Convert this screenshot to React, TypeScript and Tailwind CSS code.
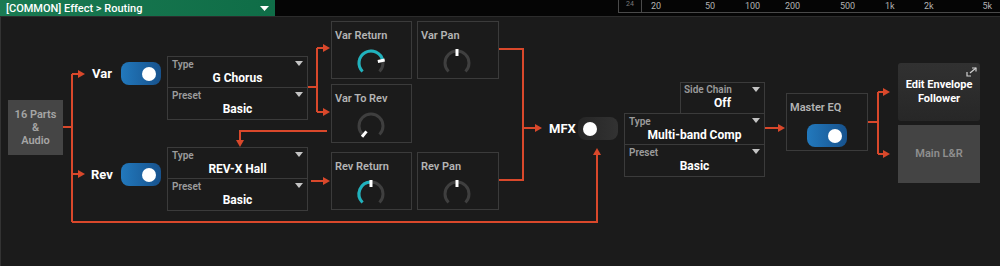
import React from "react";

const WIRE = "#d9482b";

function polar(cx: number, cy: number, r: number, deg: number) {
  const rad = (deg * Math.PI) / 180;
  return [cx + r * Math.sin(rad), cy - r * Math.cos(rad)];
}

function arc(cx: number, cy: number, r: number, from: number, to: number) {
  const [x1, y1] = polar(cx, cy, r, from);
  const [x2, y2] = polar(cx, cy, r, to);
  const large = to - from > 180 ? 1 : 0;
  return `M ${x1} ${y1} A ${r} ${r} 0 ${large} 1 ${x2} ${y2}`;
}

function Knob({ value, fill }: { value: number; fill?: boolean }) {
  const [ix1, iy1] = polar(16, 16, 7, value);
  const [ix2, iy2] = polar(16, 16, 14, value);
  return (
    <svg width="32" height="32" viewBox="0 0 32 32">
      <path d={arc(16, 16, 12, -135, 135)} stroke="#3f3f3f" strokeWidth="3" fill="none" />
      {fill && value > -135 && (
        <path d={arc(16, 16, 12, -135, value)} stroke="#1fb2bd" strokeWidth="3" fill="none" />
      )}
      <line x1={ix1} y1={iy1} x2={ix2} y2={iy2} stroke="#ffffff" strokeWidth="3" />
    </svg>
  );
}

function KnobBox({ title, value, fill, className = "" }: { title: string; value: number; fill?: boolean; className?: string }) {
  return (
    <div className={`h-[58px] border border-[#3b3b3b] bg-[#1b1b1b] ${className}`}>
      <div className="pl-[3px] pt-[7px] text-[11px] font-semibold leading-[13px] text-[#b4b4b4]">{title}</div>
      <div className="mt-[5px] flex justify-center pr-[2px]">
        <Knob value={value} fill={fill} />
      </div>
    </div>
  );
}

function Caret() {
  return (
    <svg width="8" height="5" viewBox="0 0 8 5" className="absolute right-[4px] top-[4px]">
      <polygon points="0,0 8,0 4,5" fill="#c4c4c4" />
    </svg>
  );
}

function SelectRow({ label, value, last }: { label: string; value: string; last?: boolean }) {
  return (
    <div className={`relative h-[31px] ${last ? "" : "border-b border-[#3b3b3b]"}`}>
      <div className="pl-[4px] pt-[2px] text-[10px] font-semibold leading-[12px] text-[#9c9c9c]">{label}</div>
      <Caret />
      <div className="text-center text-[12px] font-bold leading-[15px] text-white">{value}</div>
    </div>
  );
}

function FxBox({ type, className = "" }: { type: string; className?: string }) {
  return (
    <div className={`w-[141px] border border-[#3b3b3b] bg-[#1b1b1b] ${className}`}>
      <SelectRow label="Type" value={type} />
      <SelectRow label="Preset" value="Basic" last />
    </div>
  );
}

function Toggle({ on }: { on: boolean }) {
  return (
    <div
      className={`flex h-[23px] w-[40px] items-center rounded-[8px] px-[5px] ${
        on
          ? "justify-end bg-gradient-to-r from-[#2279bd] to-[#17528d]"
          : "justify-start bg-gradient-to-r from-[#262626] to-[#323232]"
      }`}
    >
      <div className="h-[14px] w-[14px] rounded-full bg-white" />
    </div>
  );
}

function Switch({ label, on, className }: { label: string; on: boolean; className: string }) {
  return (
    <div className={`absolute flex h-[23px] items-center justify-between ${className}`}>
      <span className="text-[13px] font-bold leading-[16px] text-white">{label}</span>
      <Toggle on={on} />
    </div>
  );
}

function Wires() {
  const arrowR = (x: number, y: number) => `${x - 7},${y - 4} ${x},${y} ${x - 7},${y + 4}`;
  const arrowD = (x: number, y: number) => `${x - 4},${y - 7} ${x},${y} ${x + 4},${y - 7}`;
  const arrowU = (x: number, y: number) => `${x - 4},${y + 7} ${x},${y} ${x + 4},${y + 7}`;
  return (
    <svg className="absolute inset-0" width="1000" height="249" viewBox="0 0 1000 249">
      <g stroke={WIRE} strokeWidth="2" fill="none">
        <path d="M62 110 H71" />
        <path d="M71 57 V205" />
        <path d="M71 57 H80" />
        <path d="M71 157 H80" />
        <path d="M71 205 H596 V136" />
        <path d="M307 70 H316" />
        <path d="M316 31 V95" />
        <path d="M316 31 H325" />
        <path d="M316 95 H325" />
        <path d="M326 114 H239 V124" />
        <path d="M310 164 H323" />
        <path d="M498 32 H522 V163 H498" />
        <path d="M522 111 H535" />
        <path d="M764 111 H778" />
        <path d="M867 105 H877" />
        <path d="M877 75 V137" />
        <path d="M877 75 H883" />
        <path d="M877 137 H883" />
      </g>
      <g fill={WIRE}>
        <polygon points={arrowR(84, 57)} />
        <polygon points={arrowR(84, 157)} />
        <polygon points={arrowR(329, 31)} />
        <polygon points={arrowR(329, 95)} />
        <polygon points={arrowD(239, 130)} />
        <polygon points={arrowR(329, 164)} />
        <polygon points={arrowR(541, 111)} />
        <polygon points={arrowR(784, 111)} />
        <polygon points={arrowR(889, 75)} />
        <polygon points={arrowR(889, 137)} />
        <polygon points={arrowU(596, 131)} />
      </g>
    </svg>
  );
}

const scale = ["20", "50", "100", "200", "500", "1k", "2k", "5k"];

export default function App() {
  return (
    <div className="h-[266px] w-[1000px] overflow-hidden bg-[#1b1b1b] font-['Roboto','Noto_Sans',sans-serif]">
      <header className="flex h-[16px] bg-[#050505]">
        <div className="flex h-[16px] w-[275px] items-center justify-between bg-gradient-to-r from-[#1a7a52] to-[#0f6d47] px-[6px]">
          <span className="text-[11px] font-medium leading-none text-white">[COMMON] Effect &gt; Routing</span>
          <svg width="9" height="5" viewBox="0 0 9 5">
            <polygon points="0,0 9,0 4.5,5" fill="#ffffff" />
          </svg>
        </div>
        <div className="ml-[343px] flex h-[13px] w-[24px] items-start justify-center border-x border-b border-[#4a4a4a]">
          <span className="text-[7px] leading-[8px] text-[#7a7a7a]">24</span>
        </div>
        <div className="flex h-[13px] flex-1 items-center border-b border-[#4a4a4a] pl-[9px] pr-[8px] text-[9px] leading-[10px] text-[#b2b2b2]">
          <span className="w-[54px]">{scale[0]}</span>
          <span className="w-[40px]">{scale[1]}</span>
          <span className="w-[40px]">{scale[2]}</span>
          <span className="w-[55px]">{scale[3]}</span>
          <span className="w-[45px]">{scale[4]}</span>
          <span className="w-[39px]">{scale[5]}</span>
          <span className="flex-1">{scale[6]}</span>
          <span>{scale[7]}</span>
        </div>
      </header>
      <div className="h-px bg-[#2c2c2c]" />
      <main className="relative h-[249px] border-l border-[#333333]">
        <Wires />

        <div className="absolute left-[7px] top-[83px] flex h-[55px] w-[55px] flex-col items-center justify-center bg-[#454545] text-[11px] font-semibold leading-[13px] text-[#a6a6a6]">
          <span>16 Parts</span>
          <span>&amp;</span>
          <span>Audio</span>
        </div>

        <Switch label="Var" on className="left-[91px] top-[45px] w-[69px]" />
        <Switch label="Rev" on className="left-[90px] top-[146px] w-[70px]" />

        <FxBox type="G Chorus" className="absolute left-[166px] top-[39px]" />
        <FxBox type="REV-X Hall" className="absolute left-[166px] top-[130px]" />

        <div className="absolute left-[330px] top-[4px] grid grid-cols-[81px_82px] gap-[5px]">
          <KnobBox title="Var Return" value={78} fill />
          <KnobBox title="Var Pan" value={0} />
          <KnobBox title="Var To Rev" value={-140} className="h-[59px]" />
        </div>
        <div className="absolute left-[330px] top-[135px] grid grid-cols-[81px_82px] gap-[5px]">
          <KnobBox title="Rev Return" value={0} fill />
          <KnobBox title="Rev Pan" value={0} />
        </div>

        <Switch label="MFX" on={false} className="left-[548px] top-[100px] w-[69px]" />

        <div className="absolute left-[623px] top-[65px] flex flex-col items-end">
          <div className="relative h-[31px] w-[85px] border border-b-0 border-[#3b3b3b] bg-[#1b1b1b]">
            <div className="pl-[3px] pt-[1px] text-[10px] font-semibold leading-[12px] text-[#9c9c9c]">Side Chain</div>
            <Caret />
            <div className="text-center text-[12px] font-bold leading-[15px] text-white">Off</div>
          </div>
          <FxBox type="Multi-band Comp" />
        </div>

        <div className="absolute left-[785px] top-[76px] h-[58px] w-[82px] border border-[#3b3b3b] bg-[#1b1b1b]">
          <div className="pl-[3px] pt-[7px] text-[11px] font-semibold leading-[13px] text-[#b4b4b4]">Master EQ</div>
          <div className="mt-[10px] flex justify-center">
            <Toggle on />
          </div>
        </div>

        <div className="absolute left-[897px] top-[46px] flex w-[82px] flex-col gap-[4px]">
          <div className="relative flex h-[58px] flex-col items-center justify-center rounded-[3px] bg-gradient-to-b from-[#313131] to-[#272727] text-[11px] font-bold leading-[14px] text-white">
            <svg width="11" height="10" viewBox="0 0 11 10" className="absolute right-[3px] top-[4px]">
              <g stroke="#d0d0d0" strokeWidth="1.2" fill="none">
                <path d="M4 6 L10 1" />
                <path d="M6 1 H10 V4.5" />
                <path d="M1 5 V9 H5" />
              </g>
            </svg>
            <span>Edit Envelope</span>
            <span>Follower</span>
          </div>
          <div className="flex h-[58px] items-center justify-center bg-[#444444] text-[11px] font-semibold text-[#8f8f8f]">
            Main L&amp;R
          </div>
        </div>
      </main>
    </div>
  );
}
